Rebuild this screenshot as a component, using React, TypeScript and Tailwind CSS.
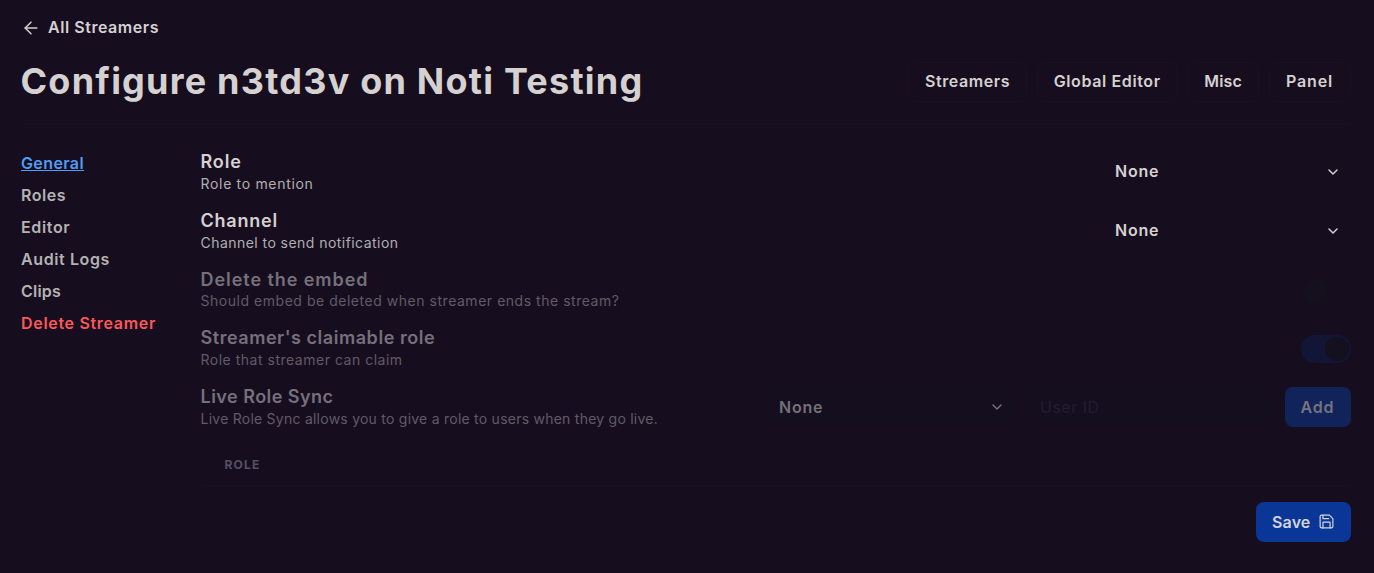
import { ArrowLeft, ChevronDown } from 'lucide-react';
import { FiSave } from 'react-icons/fi';

const tabs = [
  { label: 'Streamers', style: 'w-[119px] tracking-[0.57px]' },
  { label: 'Global Editor', style: 'w-[141px] tracking-[0.62px]' },
  { label: 'Misc', style: 'w-[72px] tracking-[0.1px]' },
  { label: 'Panel', style: 'w-[82px] tracking-[0.84px]' },
];

const links = [
  { label: 'General', style: 'text-[#4f9cf5] underline tracking-[0.39px]' },
  { label: 'Roles', style: 'text-[#b5b2b4] tracking-[0.5px]' },
  { label: 'Editor', style: 'text-[#b5b2b4] tracking-[0.65px]' },
  { label: 'Audit Logs', style: 'text-[#b5b2b4] tracking-[0.61px]' },
  { label: 'Clips', style: 'text-[#b5b2b4] tracking-[0.21px]' },
  { label: 'Delete Streamer', style: 'text-[#fa5858] tracking-[0.68px]' },
];

type RowProps = {
  title: string;
  titleStyle: string;
  text: string;
  textStyle: string;
  muted?: boolean;
  children: React.ReactNode;
};

function Row({ title, titleStyle, text, textStyle, muted, children }: RowProps) {
  return (
    <div className="flex h-[44.75px] items-center justify-between">
      <div className="-ml-[0.5px] whitespace-nowrap">
        <h2 className={`text-[18px] leading-[24.75px] font-semibold ${muted ? 'text-[#75707a]' : 'text-[#d6d1d1]'} ${titleStyle}`}>
          {title}
        </h2>
        <p className={`text-[14px] leading-[18px] ${muted ? 'text-[#605b66]' : 'text-[#b2aeb0]'} ${textStyle}`}>{text}</p>
      </div>
      {children}
    </div>
  );
}

function Select({ muted }: { muted?: boolean }) {
  return (
    <button
      className={`flex h-10 items-center justify-between rounded-lg pl-4 text-base font-semibold tracking-[0.75px] ${
        muted ? 'w-[250px] bg-[#150e1e] pr-2 text-[#75707a]' : 'w-[252px] pr-[10px] text-[#d6d1d1]'
      }`}
    >
      None
      <ChevronDown size={16} strokeWidth={2.2} className="mt-px" />
    </button>
  );
}

function Toggle({ on }: { on?: boolean }) {
  return (
    <div className={`flex h-7 w-[50px] items-center rounded-full px-0.5 ${on ? 'mt-[2px] justify-end bg-[#111536]' : 'mt-[5px]'}`}>
      <div className={`size-6 rounded-full ${on ? 'bg-[#15101e]' : 'bg-[#14101e]'}`} />
    </div>
  );
}

export default function App() {
  return (
    <div className="h-[573px] w-full overflow-hidden bg-[#160e1f] pr-[23px] pl-[21px] font-['Inter',sans-serif] text-[#d6d1d1]">
      <header className="flex h-[124px] flex-col border-b border-[#18121f] pt-[15px]">
        <a className="flex h-6 items-center gap-[7px] text-base font-semibold tracking-[0.55px]">
          <ArrowLeft size={20} strokeWidth={1.8} className="mt-[2px]" />
          All Streamers
        </a>
        <div className="mt-[22px] flex h-10 items-center justify-between">
          <h1 className="-ml-[0.5px] text-[36px] leading-10 font-bold tracking-[1.22px] whitespace-nowrap">
            Configure n3td3v on Noti Testing
          </h1>
          <nav className="mt-[2px] flex gap-[9.67px]">
            {tabs.map((tab) => (
              <button
                key={tab.label}
                className={`flex h-10 items-center rounded-lg border border-[#18121f] pb-[2px] pl-4 text-base font-semibold whitespace-nowrap ${tab.style}`}
              >
                {tab.label}
              </button>
            ))}
          </nav>
        </div>
      </header>

      <div className="flex pt-[25px]">
        <aside className="w-[180px] shrink-0">
          {links.map((link) => (
            <a
              key={link.label}
              className={`block h-8 text-base leading-[29px] font-semibold whitespace-nowrap ${link.style}`}
            >
              {link.label}
            </a>
          ))}
        </aside>

        <main className="flex grow flex-col">
          <div className="flex flex-col gap-[14px]">
            <Row title="Role" titleStyle="tracking-[0.85px]" text="Role to mention" textStyle="tracking-[0.68px]">
              <Select />
            </Row>
            <Row title="Channel" titleStyle="tracking-[0.79px]" text="Channel to send notification" textStyle="tracking-[0.45px]">
              <Select />
            </Row>
            <Row
              muted
              title="Delete the embed"
              titleStyle="tracking-[0.94px]"
              text="Should embed be deleted when streamer ends the stream?"
              textStyle="tracking-[0.53px]"
            >
              <Toggle />
            </Row>
            <Row
              muted
              title="Streamer's claimable role"
              titleStyle="tracking-[0.54px]"
              text="Role that streamer can claim"
              textStyle="tracking-[0.51px]"
            >
              <Toggle on />
            </Row>
            <Row
              muted
              title="Live Role Sync"
              titleStyle="tracking-[0.47px]"
              text="Live Role Sync allows you to give a role to users when they go live."
              textStyle="tracking-[0.242px]"
            >
              <div className="mt-px flex gap-[10px]">
                <Select muted />
                <input
                  placeholder="User ID"
                  className="h-10 w-[252px] rounded-lg bg-[#150e1e] pl-[17px] text-base tracking-[0.5px] placeholder:text-[#241c2f]"
                />
                <button className="h-10 w-[66px] rounded-lg bg-[#10245b] pl-[15.5px] text-left text-base font-semibold tracking-[0.87px] text-[#77737d]">
                  Add
                </button>
              </div>
            </Row>
          </div>

          <div className="mt-[16px] h-[41px] border-b border-[#18121f] pl-[23.5px] text-[12px] leading-[40px] font-bold tracking-[1.2px] text-[#555165]">
            ROLE
          </div>
          <button className="mt-4 flex h-10 w-[95px] items-center self-end rounded-lg bg-[#0a3797] pl-4 text-base font-semibold tracking-[0.15px] text-[#d3d4dc]">
            Save
            <FiSave size={17} strokeWidth={1.7} className="ml-[8px]" />
          </button>
        </main>
      </div>
    </div>
  );
}
